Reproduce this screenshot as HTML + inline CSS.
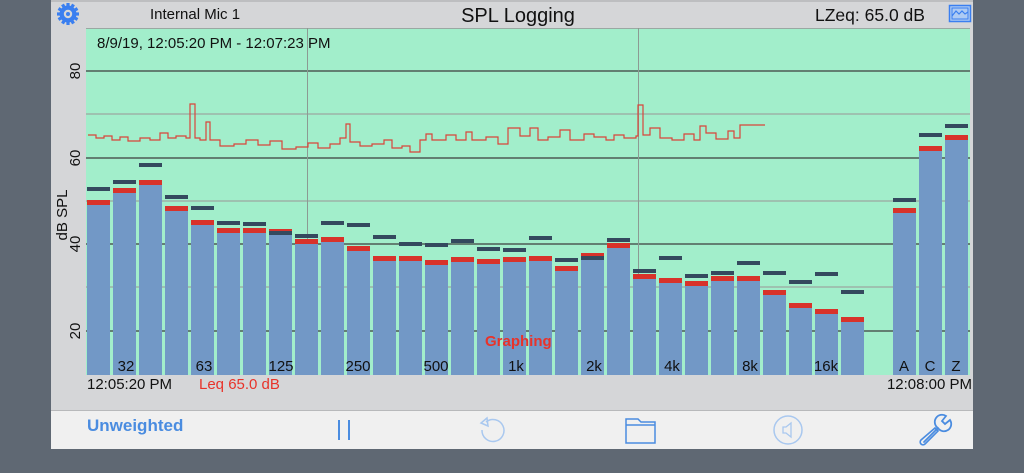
<!DOCTYPE html>
<html><head><meta charset="utf-8"><style>
html,body{margin:0;padding:0;width:1024px;height:473px;overflow:hidden;background:#5f6873;font-family:"Liberation Sans",sans-serif}
svg{position:absolute;left:0;top:0}
</style></head><body>
<svg id="s" width="1024" height="473" xmlns="http://www.w3.org/2000/svg" font-family="Liberation Sans, sans-serif">
<rect x="0" y="0" width="1024" height="473" fill="#5f6873"/>
<rect x="51" y="0" width="922" height="411" fill="#d5d6d8"/>
<rect x="51" y="0" width="922" height="2" fill="#bdbec0"/>
<rect x="51" y="410" width="922" height="39" fill="#f0f0f0"/>
<line x1="51" y1="410.5" x2="973" y2="410.5" stroke="#b8b9bb"/>
<rect x="86" y="28" width="884" height="347" fill="#a2eecb"/>
<line x1="86" y1="28.5" x2="970" y2="28.5" stroke="#9aa8a2"/>
<g stroke="#9db2a7" stroke-width="1.5">
<line x1="86" y1="114" x2="970" y2="114"/><line x1="86" y1="201" x2="970" y2="201"/><line x1="86" y1="287" x2="970" y2="287"/>
</g>
<g stroke="#4d5a54" stroke-width="1.5">
<line x1="86" y1="71" x2="970" y2="71"/><line x1="86" y1="158" x2="970" y2="158"/><line x1="86" y1="244" x2="970" y2="244"/><line x1="86" y1="331" x2="970" y2="331"/>
</g>
<g stroke="#8c9a93" stroke-width="1"><line x1="307.5" y1="28" x2="307.5" y2="375"/><line x1="638.5" y1="28" x2="638.5" y2="375"/></g>
<g id="bars"></g>
<path fill="none" stroke="#d9443a" stroke-width="1.2" d="M88 135 H96 V138 H104 V136 H112 V140 H120 V137 H128 V141 H140 V138 H150 V140 H160 V133 H168 V138 H176 V136 H186 V138 H190 V104 H195 V138 H200 V140 H206 V122 H210 V140 H220 V146 H234 V144 H246 V140 H258 V145 H270 V141 H282 V149 H296 V147 H308 V143 H318 V148 H330 V144 H340 V138 H346 V124 H350 V142 H360 V146 H372 V144 H384 V140 H392 V148 H402 V146 H410 V152 H420 V140 H426 V134 H432 V140 H446 V135 H456 V140 H466 V132 H472 V140 H486 V137 H498 V144 H508 V128 H520 V136 H530 V128 H538 V140 H548 V137 H560 V130 H570 V140 H584 V134 H594 V137 H606 V140 H614 V135 H624 V138 H636 V136 H638 V105 H643 V135 H650 V128 H660 V138 H672 V140 H684 V134 H694 V140 H700 V126 H706 V133 H716 V139 H728 V131 H734 V138 H740 V125 H752 V125 H765"/>
<text x="97" y="48" font-size="15" fill="#111">8/9/19, 12:05:20 PM - 12:07:23 PM</text>
<g font-size="15" fill="#111">
<text transform="translate(80,71) rotate(-90)" text-anchor="middle">80</text>
<text transform="translate(80,158) rotate(-90)" text-anchor="middle">60</text>
<text transform="translate(80,244) rotate(-90)" text-anchor="middle">40</text>
<text transform="translate(80,331) rotate(-90)" text-anchor="middle">20</text>
<text transform="translate(67,215) rotate(-90)" text-anchor="middle">dB SPL</text>
</g>
<g font-size="15" fill="#111" text-anchor="middle" id="xl">
<text x="126" y="371">32</text><text x="204" y="371">63</text><text x="281" y="371">125</text><text x="358" y="371">250</text><text x="436" y="371">500</text><text x="516" y="371">1k</text><text x="594" y="371">2k</text><text x="672" y="371">4k</text><text x="750" y="371">8k</text><text x="826" y="371">16k</text><text x="904" y="371">A</text><text x="930" y="371">C</text><text x="956" y="371">Z</text>
</g>
<text x="485" y="346" font-size="15" font-weight="bold" fill="#e8332a">Graphing</text>
<text x="87" y="389" font-size="15" fill="#111">12:05:20 PM</text>
<text x="199" y="389" font-size="15" fill="#e8332a">Leq 65.0 dB</text>
<text x="972" y="389" font-size="15" fill="#111" text-anchor="end">12:08:00 PM</text>
<text x="150" y="19" font-size="15" fill="#111">Internal Mic 1</text>
<text x="518" y="22" font-size="20" fill="#111" text-anchor="middle">SPL Logging</text>
<text x="815" y="21" font-size="17.5" fill="#111">LZeq: 65.0 dB</text>
<g transform="translate(68,14)" fill="#3a7ff0">
<circle r="8.5"/>
<g id="teeth"></g>
<circle r="4.2" fill="#d5d6d8"/><circle r="2" fill="#3a7ff0"/>
</g>
<rect x="949.5" y="5.5" width="21" height="16" fill="#aecbf3" stroke="#3a7ff0" stroke-width="1.5"/>
<rect x="952" y="8" width="16" height="11" fill="none" stroke="#3a7ff0" stroke-width="1"/>
<path d="M952 16 L956 11 L959 14 L962 11 L965 14 L968 12" fill="none" stroke="#3a7ff0" stroke-width="1.2"/>
<text x="87" y="431" font-size="17" font-weight="bold" fill="#4a8ce0">Unweighted</text>
<rect x="338" y="420" width="2" height="20" fill="#4a8ce0"/><rect x="348" y="420" width="2" height="20" fill="#4a8ce0"/>
<path d="M486 422 A11 11 0 1 1 482 430" fill="none" stroke="#a9c8ef" stroke-width="1.5"/>
<path d="M487 418 L481 423 L488 426 Z" fill="none" stroke="#a9c8ef" stroke-width="1.5"/>
<path d="M626 419 H638 L641 422 H655 V443 H626 Z M626 425 H655" fill="none" stroke="#4a8ce0" stroke-width="1.5"/>
<circle cx="788" cy="430" r="14" fill="none" stroke="#a9c8ef" stroke-width="1.5"/>
<path d="M783 427 H786 L791 423 V437 L786 433 H783 Z" fill="none" stroke="#a9c8ef" stroke-width="1.3"/>
<path d="M924 442 L938 428 M938 428 A7 7 0 0 1 946 416 L942 421 L945 424 L950 420 A7 7 0 0 1 938 428" fill="none" stroke="#4a8ce0" stroke-width="1.8" stroke-linecap="round"/>
<path d="M921 440 A2.5 2.5 0 0 0 925 444 L938 431 L935 428 Z" fill="none" stroke="#4a8ce0" stroke-width="1.6"/>
</svg>
<script>
var NS="http://www.w3.org/2000/svg",g=document.getElementById('bars');
function r(x,y,w,h,c){var e=document.createElementNS(NS,'rect');e.setAttribute('x',x);e.setAttribute('y',y);e.setAttribute('width',w);e.setAttribute('height',h);e.setAttribute('fill',c);g.appendChild(e);}
var d=[[200,187],[188,180],[180,163],[206,195],[220,206],[228,221],[228,222],[229,231],[239,234],[237,221],[246,223],[256,235],[256,242],[260,243],[257,239],[259,247],[257,248],[256,236],[266,258],[253,256],[243,238],[274,269],[278,256],[281,274],[276,271],[276,261],[290,271],[303,280],[309,272],[317,290]];
var xs=[];for(var i=0;i<30;i++)xs.push(87+i*26);xs.push(893,919,945);
d.push([208,198],[146,133],[135,124]);
for(var i=0;i<d.length;i++){var x=xs[i],ry=d[i][0],m=d[i][1];
r(x,ry+4,23,375-ry-4,'#7298c6');r(x,ry,23,5,'#d8322a');r(x,m,23,4,'#34495e');}
var t=document.getElementById('teeth');
for(var a=0;a<12;a++){var e=document.createElementNS(NS,'rect');e.setAttribute('x',-1.6);e.setAttribute('y',-11);e.setAttribute('width',3.2);e.setAttribute('height',4);e.setAttribute('transform','rotate('+a*30+')');t.appendChild(e);}
</script>
</body></html>
